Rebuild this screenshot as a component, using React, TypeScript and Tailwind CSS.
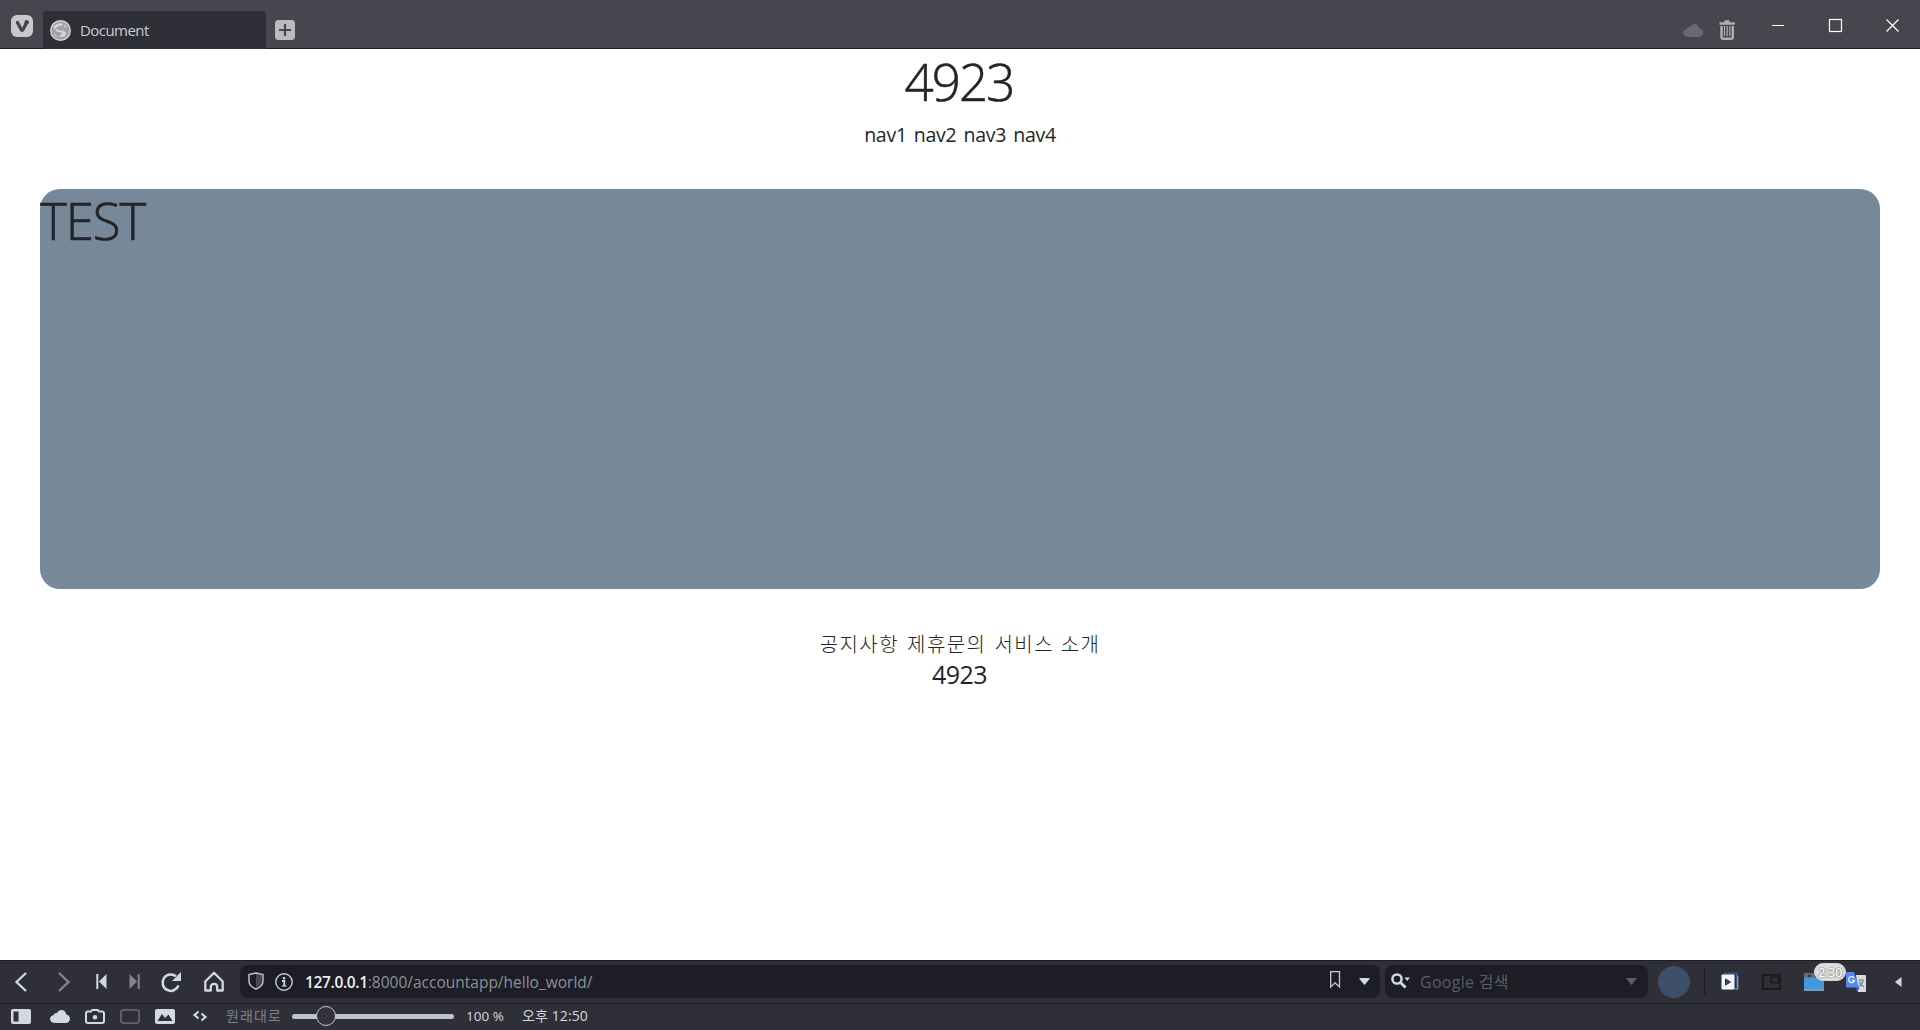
import type { ReactNode } from 'react';

type SlotProps = { className: string; w: number; h: number; children: ReactNode };

/** Centres a pixel-sized drawing inside a fixed toolbar slot. */
function Slot({ className, w, h, children }: SlotProps) {
  return (
    <div className={'flex h-full shrink-0 items-center justify-center ' + className}>
      <svg width={w} height={h} viewBox={`0 0 ${w} ${h}`} fill="none" className="shrink-0 overflow-visible">
        {children}
      </svg>
    </div>
  );
}

const cloud = 'M5 13C2 13 0 11.300 0 9C0 7 1.500 5.500 3.500 5.200C4 3.500 5.500 2.800 7 3C8 1 9.500 0 11.500 0C14 0 16 1.800 16.200 4.500C18.500 4.800 20 6.500 20 8.700C20 11.200 18.200 13 16 13Z';

function TitleBar() {
  return (
    <header className="flex h-[49px] items-start border-b border-[#1c1c26] bg-[#46464f]">
      <Slot className="w-[43px] pt-[3px]" w={22} h={22}>
        <rect width="22" height="22" rx="6" fill="#c9c9cc" />
        <path d="M6.500 7.500L10 14.300Q11 16.500 12.200 14.300L15.500 8" stroke="#46464f" strokeWidth="3.300" strokeLinecap="round" strokeLinejoin="round" />
        <circle cx="15.700" cy="7.300" r="2.300" fill="#46464f" />
      </Slot>
      <div className="mt-[11px] flex h-[38px] w-[223px] items-center rounded-t-[3px] bg-[#2f2f38] pl-[7px]">
        <svg width="21" height="21" viewBox="0 0 21 21" fill="none">
          <circle cx="10.500" cy="10.500" r="9.800" fill="#9ea1a6" stroke="#d4d5d7" strokeWidth="1.400" />
          <path d="M3.500 7.500C5.500 4.200 8.500 3 12 3.400L13 4.800L10.500 6L8 6.200L6.500 8L4.500 9Z" fill="#d4d5d7" />
          <path d="M5 9.500L7.500 9L9 10.500L13.500 10.500L15.500 12.500L16.500 14L14 16.500L10.500 17.200L9.500 15.200L12.500 14L10.500 12.300L7 12Z" fill="#d4d5d7" />
          <path d="M14.500 4.500L17 7.500L15.500 8L13.500 6.500ZM3 12L6.500 15.500L8 17.500L5 16Z" fill="#c8cacd" />
        </svg>
        <span className="ml-[9px] text-[15px] leading-5 tracking-[-0.550px] text-[#c9ccd6]">Document</span>
      </div>
      <Slot className="w-[38px] pt-[11px]" w={20} h={20}>
        <rect width="20" height="20" rx="3.500" fill="#bbbbbe" />
        <path d="M10 4V16M4 10H16" stroke="#46464f" strokeWidth="2.200" />
      </Slot>
      <div className="flex-1" />
      <Slot className="w-[34px] pt-[12px]" w={21} h={13}>
        <path d={cloud} fill="#686870" />
      </Slot>
      <Slot className="w-[35px] pt-[12px]" w={17} h={20}>
        <path d="M5.500 1.500H10.500M0.500 3.500H16" stroke="#aeafb4" strokeWidth="2.500" />
        <path d="M2.500 6V17Q2.500 18.800 4.300 18.800H12Q13.800 18.800 13.800 17V6" stroke="#aeafb4" strokeWidth="2.400" />
        <path d="M5.500 6V16M8.200 6V16M10.900 6V16" stroke="#aeafb4" strokeWidth="1.200" />
      </Slot>
      <Slot className="ml-[4px] w-[57px] pt-[2px]" w={12} h={12}>
        <path d="M0 6.500H12" stroke="#fff" />
      </Slot>
      <Slot className="w-[58px] pt-[2px]" w={13} h={13}>
        <rect x="0.500" y="0.500" width="12" height="12" stroke="#fff" strokeWidth="1.200" />
      </Slot>
      <Slot className="w-[56px] pt-[2px]" w={13} h={13}>
        <path d="M0.500 0.500L12.500 12.500M12.500 0.500L0.500 12.500" stroke="#fff" strokeWidth="1.200" />
      </Slot>
    </header>
  );
}

function Page() {
  return (
    <main className="h-[911px] bg-white text-[#212529]">
      <h1 className="pt-[2px] pr-[2px] text-center text-[51px] leading-[60px] font-light tracking-[-1.900px] [-webkit-text-stroke:0.6px_#212529]">4923</h1>
      <nav className="mt-[9px] flex justify-center gap-[7px] text-[19.500px] leading-[30px] tracking-[-0.250px]">
        <span>nav1</span>
        <span>nav2</span>
        <span>nav3</span>
        <span>nav4</span>
      </nav>
      <section className="mx-10 mt-[39px] h-[400px] rounded-[20px] bg-[#778899]">
        <h1 className="pt-px text-[51px] leading-[60px] font-light tracking-[-1.100px] [-webkit-text-stroke:0.6px_#212529]">TEST</h1>
      </section>
      <footer className="pt-[41px] text-center">
        <div className="flex justify-center gap-[8px] text-[20px] leading-[30px] font-light tracking-[1.450px]">
          <span>공지사항</span>
          <span>제휴문의</span>
          <span>서비스 소개</span>
        </div>
        <h5 className="-mt-[3px] pr-px text-[25px] leading-[34px] tracking-[-0.500px]">4923</h5>
      </footer>
    </main>
  );
}

function AddressBar() {
  return (
    <div className="flex h-[33px] w-[1140px] shrink-0 items-center rounded-[8px] bg-[#1d1d26]">
      <Slot className="w-[31px] pl-px pb-px" w={16} h={18}>
        <path d="M8 1L15 2.500V9C15 13 12 15.500 8 17C4 15.500 1 13 1 9V2.500Z" stroke="#c6cad4" strokeWidth="1.400" />
        <path d="M8 2L14 3.300V9C14 12.300 11.500 14.700 8 16Z" fill="#484952" />
      </Slot>
      <Slot className="w-[26px]" w={18} h={18}>
        <circle cx="9" cy="9" r="8.200" stroke="#c6cad4" strokeWidth="1.400" />
        <path d="M7 8H9.300V13" stroke="#d4d8e1" strokeWidth="1.800" />
        <path d="M7 13H11.500" stroke="#d4d8e1" strokeWidth="1.200" />
        <circle cx="9.100" cy="5.200" r="1.300" fill="#d4d8e1" />
      </Slot>
      <span className="ml-[8px] text-[15.500px] leading-5 text-[#8d9099]">
        <span className="font-semibold tracking-[-0.350px] text-[#eef0f5]">127.0.0.1</span>
        <span>:8000/accountapp/hello_world/</span>
      </span>
      <div className="flex-1" />
      <Slot className="w-[30px] pb-[3px]" w={11} h={18}>
        <path d="M0.700 0.700H9.500V16L5.100 11.800L0.700 16Z" stroke="#c6cad4" strokeWidth="1.300" />
      </Slot>
      <Slot className="w-[30px] pr-px" w={11} h={7}>
        <path d="M1 0H10Q11 0 10.500 1L6 6.500Q5.500 7 5 6.500L0.500 1Q0 0 1 0Z" fill="#d4d8e1" />
      </Slot>
    </div>
  );
}

function SearchField() {
  return (
    <div className="ml-[5px] flex h-[33px] w-[263px] shrink-0 items-center rounded-[8px] bg-[#1d1d26]">
      <Slot className="w-[31px] pb-[2px]" w={19} h={16}>
        <circle cx="6" cy="6" r="4.600" stroke="#d4d8e1" strokeWidth="2.500" />
        <path d="M9 9L14.500 14.500" stroke="#d4d8e1" strokeWidth="2.800" />
        <path d="M13.500 4.500H19L16.200 8Z" fill="#d4d8e1" />
      </Slot>
      <span className="ml-[4px] text-[16px] leading-6 tracking-[0.300px] text-[#5b5c65]">Google 검색</span>
      <div className="flex-1" />
      <Slot className="w-[33px]" w={11} h={7}>
        <path d="M0 0H11L5.500 7Z" fill="#5e5f68" />
      </Slot>
    </div>
  );
}

function NavigationBar() {
  return (
    <div className="flex h-[43px] items-center border-t border-[#1c1c26] bg-[#2f2f38] pb-px">
      <Slot className="w-[42px]" w={12} h={20}>
        <path d="M11 1L1.500 10L11 19" stroke="#d4d8e1" strokeWidth="2.300" />
      </Slot>
      <Slot className="w-[44px]" w={12} h={20}>
        <path d="M1 1L10.500 10L1 19" stroke="#82848e" strokeWidth="2.300" />
      </Slot>
      <Slot className="w-[31px]" w={11} h={15}>
        <path d="M1.300 0V15" stroke="#d4d8e1" strokeWidth="2" />
        <path d="M10.500 0V15L3 7.500Z" fill="#d4d8e1" />
      </Slot>
      <Slot className="w-[35px]" w={11} h={15}>
        <path d="M9.700 0V15" stroke="#82848e" strokeWidth="2" />
        <path d="M0.500 0V15L8 7.500Z" fill="#82848e" />
      </Slot>
      <Slot className="w-[38px]" w={20} h={20}>
        <path d="M15 4.300A8.200 8.200 0 1 0 17.500 13.500" stroke="#d4d8e1" strokeWidth="2.500" />
        <path d="M20 0V9H11Z" fill="#d4d8e1" />
      </Slot>
      <Slot className="w-[48px]" w={20} h={21}>
        <path d="M1.300 10.500L10 1.700L18.700 10.500V19.500H13.200V16C13.200 11.700 6.800 11.700 6.800 16V19.500H1.300Z" stroke="#d4d8e1" strokeWidth="2.300" strokeLinejoin="round" />
      </Slot>
      <div className="w-[2px] shrink-0" />
      <AddressBar />
      <SearchField />
      <div className="ml-[10px] size-[32px] shrink-0 rounded-full bg-[#3d4e6a]" />
      <div className="ml-[14px] h-[26px] w-px shrink-0 bg-[#1d1d26]" />
      <Slot className="w-[49px]" w={18} h={17}>
        <path d="M3 0.500H16V14" stroke="#31578f" strokeWidth="2" />
        <path d="M16.800 3V16H14" stroke="#aeb4be" />
        <rect x="0.500" y="1.500" width="13" height="15" rx="1" fill="#f5f6f8" />
        <path d="M4.500 6L9.500 9L4.500 12Z" fill="#264f8a" stroke="#222c40" />
      </Slot>
      <Slot className="w-[35px] pr-px" w={19} h={16}>
        <rect x="0.800" y="0.800" width="17.500" height="14.200" stroke="#18181c" strokeWidth="1.700" />
        <path d="M9 3V8.500H16.500V3Z" stroke="#18181c" strokeWidth="1.500" />
      </Slot>
      <div className="relative flex h-full w-[50px] shrink-0 items-center justify-center">
        <svg width="20" height="18" viewBox="0 0 20 18" className="mr-px">
          <path d="M0 0H11V5H0Z" fill="#6b6b6c" />
          <circle cx="5.500" cy="3" r="1.400" fill="#303038" />
          <path d="M0 4.500H20V17H0Z" fill="#4398dc" />
          <path d="M0 17H20" stroke="#6f9fc4" strokeWidth="2" />
        </svg>
        <span className="absolute top-[2px] left-[25px] z-10 flex h-[18px] w-[32px] items-center justify-center rounded-full border border-[#d2d2d2] bg-[#dedede] text-[13px] leading-none font-semibold tracking-[-0.500px] text-white [text-shadow:0_0_1px_#555,0_0_2px_#777]">
          2:30
        </span>
      </div>
      <Slot className="w-[34px]" w={20} h={20}>
        <path d="M10 3H19Q20 3 20 4V19Q20 20 19 20H12Z" fill="#d9dadd" />
        <path d="M12.500 8H18M15.200 7V8.500M17 8.500Q16 13 12.500 14.500M13 9.500Q15 13.500 18 15" stroke="#71868f" strokeWidth="1.200" />
        <path d="M1 0H8L13 15.500H1Q0 15.500 0 14.500V1Q0 0 1 0Z" fill="#548af0" />
        <path d="M9.500 15.500H13.500L11 20Z" fill="#3756b9" />
        <path d="M8.200 6A3 3 0 1 0 8.500 8.500H6" stroke="#edf2ff" strokeWidth="1.300" />
      </Slot>
      <Slot className="w-[47px] pl-[4px]" w={7} h={10}>
        <path d="M6.500 0V10L0.500 5.500Q0 5 0.500 4.500Z" fill="#d4d8e1" />
      </Slot>
    </div>
  );
}

function StatusBar() {
  return (
    <div className="flex h-[27px] items-center border-t border-[#1c1c26] bg-[#2f2f38] pb-[2px] pl-[3px]">
      <Slot className="w-[36px]" w={20} h={15}>
        <rect width="20" height="15" rx="2" fill="#d4d8e1" />
        <rect x="2.500" y="2.500" width="5" height="10" fill="#30303a" />
      </Slot>
      <Slot className="ml-[3px] w-[35px]" w={20} h={13}>
        <path d={cloud} fill="#d4d8e1" />
      </Slot>
      <Slot className="w-[35px]" w={20} h={15}>
        <path d="M6 2.500L7.200 1H12.800L14 2.500H17Q19 2.500 19 4.500V12Q19 14 17 14H3Q1 14 1 12V4.500Q1 2.500 3 2.500Z" stroke="#d4d8e1" strokeWidth="2" />
        <circle cx="10" cy="8.300" r="2.300" fill="#d4d8e1" />
      </Slot>
      <Slot className="w-[35px]" w={20} h={15}>
        <rect x="0.900" y="0.900" width="18.200" height="13.200" rx="2.500" stroke="#62636d" strokeWidth="1.800" />
      </Slot>
      <Slot className="w-[35px]" w={20} h={15}>
        <rect width="20" height="15" rx="2" fill="#d4d8e1" />
        <path d="M2.500 12L7 5L10 9L13.500 5.500L17.500 12Z" fill="#2f2f38" />
      </Slot>
      <Slot className="w-[35px]" w={14} h={12}>
        <path d="M5.500 1.500L1.500 5L5.500 8.500M8.500 3.500L12.500 7L8.500 10.500" stroke="#d4d8e1" strokeWidth="2.200" />
      </Slot>
      <span className="ml-[9px] w-[66px] shrink-0 text-[14px] leading-5 tracking-[1.100px] whitespace-nowrap text-[#7e818b]">원래대로</span>
      <div className="relative flex h-full w-[162px] shrink-0 items-center">
        <div className="h-[5px] w-full rounded-full bg-[#bec2cf]" />
        <div className="absolute top-[2px] left-[24px] size-[20px] rounded-full border border-[#c3c7d1] bg-[#32323c]" />
      </div>
      <span className="ml-[12px] w-[56px] shrink-0 text-[13.500px] leading-5 whitespace-nowrap text-[#d4d8e1]">100 %</span>
      <span className="text-[14px] leading-5 tracking-[0.100px] whitespace-nowrap text-[#d4d8e1]">오후 12:50</span>
    </div>
  );
}

export default function App() {
  return (
    <div className="flex h-[1030px] w-[1920px] flex-col overflow-hidden font-['Open_Sans','Noto_Sans_CJK_KR',sans-serif]">
      <TitleBar />
      <Page />
      <NavigationBar />
      <StatusBar />
    </div>
  );
}
